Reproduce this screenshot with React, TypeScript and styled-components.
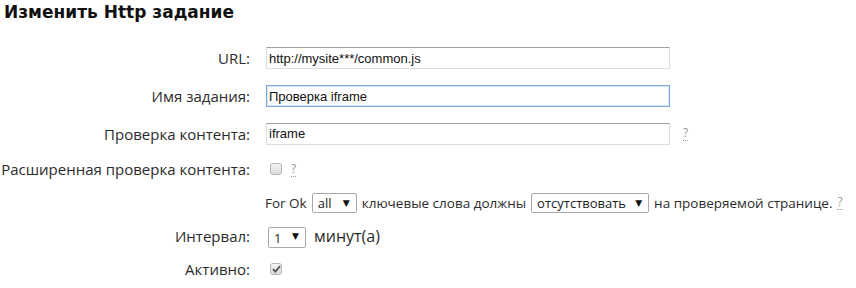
import React from 'react';
import styled, { createGlobalStyle } from 'styled-components';

const GlobalStyle = createGlobalStyle`
  html, body {
    margin: 0;
    padding: 0;
    background: #ffffff;
  }
  body {
    font-family: "Open Sans", "Noto Sans", sans-serif;
    color: #2b2b2b;
  }
`;

const Page = styled.div`
  width: 856px;
  height: 288px;
  overflow: hidden;
`;

const Title = styled.h1`
  margin: 0;
  padding: 0 4px;
  height: 39px;
  line-height: 24px;
  font-family: "DejaVu Sans", Verdana, sans-serif;
  font-size: 17px;
  font-weight: bold;
  color: #111111;
`;

const Form = styled.div`
  display: flex;
  flex-direction: column;
`;

const Row = styled.div<{ $h: number }>`
  display: flex;
  align-items: center;
  height: ${(p) => p.$h}px;
`;

const Label = styled.div`
  width: 250px;
  flex: none;
  text-align: right;
  font-size: 15px;
  color: #2b2b2b;
  white-space: nowrap;
`;

const Cell = styled.div<{ $pad?: number; $size?: number; $gap?: number }>`
  display: flex;
  align-items: center;
  gap: ${(p) => p.$gap ?? 6}px;
  padding-left: ${(p) => p.$pad ?? 16}px;
  font-size: ${(p) => p.$size ?? 13.5}px;
  color: #2b2b2b;
  white-space: nowrap;
`;

const TextInput = styled.input<{ $focused?: boolean }>`
  box-sizing: border-box;
  width: 404px;
  height: 22px;
  margin: 0;
  padding: 0 2px;
  font-family: "Liberation Sans", Arial, sans-serif;
  font-size: 13px;
  color: #111111;
  background: #ffffff;
  outline: none;
  border: 1px solid #dedede;
  border-top-color: #a2a2a2;
  ${(p) =>
    p.$focused &&
    `
    border: 1px solid #7fa7d9;
    box-shadow: inset 0 0 0 1px #d7e5f7;
  `}
`;

const Help = styled.span<{ $ml?: number }>`
  display: inline-block;
  margin-left: ${(p) => p.$ml ?? 7}px;
  font-size: 12px;
  line-height: 14px;
  color: #9a9a9a;
  border-bottom: 1px dotted #9a9a9a;
  cursor: help;
`;

const Check = styled.span`
  box-sizing: border-box;
  display: inline-flex;
  align-items: center;
  justify-content: center;
  width: 12px;
  height: 12px;
  margin-left: 4px;
  border: 1px solid #b4b4b4;
  border-radius: 3px;
  background: linear-gradient(#f4f4f4, #dcdcdc);
`;

const SelectWrap = styled.span<{ $w: number; $h?: number }>`
  position: relative;
  display: inline-block;
  width: ${(p) => p.$w}px;
  height: ${(p) => p.$h ?? 20}px;
`;

const Select = styled.select`
  box-sizing: border-box;
  appearance: none;
  width: 100%;
  height: 100%;
  margin: 0;
  padding: 0 0 0 5px;
  font-family: "Open Sans", "Noto Sans", sans-serif;
  font-size: 13px;
  color: #222222;
  background: #ffffff;
  border: 1px solid #a8a8a8;
  border-radius: 2px;
  outline: none;
`;

const Arrow = styled.span`
  position: absolute;
  right: 7px;
  top: 50%;
  transform: translateY(-50%);
  font-family: "DejaVu Sans", sans-serif;
  font-size: 9px;
  line-height: 9px;
  color: #111111;
  pointer-events: none;
`;

const Drop = ({ w, h, value, options }: { w: number; h?: number; value: string; options: string[] }) => (
  <SelectWrap $w={w} $h={h}>
    <Select defaultValue={value}>
      {options.map((o) => (
        <option key={o}>{o}</option>
      ))}
    </Select>
    <Arrow>▼</Arrow>
  </SelectWrap>
);

const CheckMark = () => (
  <svg width="9" height="8" viewBox="0 0 9 8">
    <path d="M1 4.2 L3.4 6.6 L8 1.2" fill="none" stroke="#555" strokeWidth="1.8" />
  </svg>
);

export default function App() {
  return (
    <Page>
      <GlobalStyle />
      <Title>Изменить Http задание</Title>
      <Form>
        <Row $h={38}>
          <Label>URL:</Label>
          <Cell>
            <TextInput defaultValue="http://mysite***/common.js" />
          </Cell>
        </Row>
        <Row $h={38}>
          <Label>Имя задания:</Label>
          <Cell>
            <TextInput $focused defaultValue="Проверка iframe" />
          </Cell>
        </Row>
        <Row $h={37}>
          <Label>Проверка контента:</Label>
          <Cell>
            <TextInput defaultValue="iframe" />
            <Help>?</Help>
          </Cell>
        </Row>
        <Row $h={34}>
          <Label>Расширенная проверка контента:</Label>
          <Cell>
            <Check />
            <Help $ml={3}>?</Help>
          </Cell>
        </Row>
        <Row $h={33}>
          <Label />
          <Cell $pad={15} $gap={5}>
            For Ok
            <Drop w={45} value="all" options={['all', 'any']} />
            ключевые слова должны
            <Drop w={118} value="отсутствовать" options={['присутствовать', 'отсутствовать']} />
            на проверяемой странице.
            <Help $ml={0}>?</Help>
          </Cell>
        </Row>
        <Row $h={34}>
          <Label>Интервал:</Label>
          <Cell $pad={18} $size={16} $gap={8}>
            <Drop w={38} h={21} value="1" options={['1', '5', '10', '15', '30', '60']} />
            минут(а)
          </Cell>
        </Row>
        <Row $h={32}>
          <Label>Активно:</Label>
          <Cell>
            <Check>
              <CheckMark />
            </Check>
          </Cell>
        </Row>
      </Form>
    </Page>
  );
}
